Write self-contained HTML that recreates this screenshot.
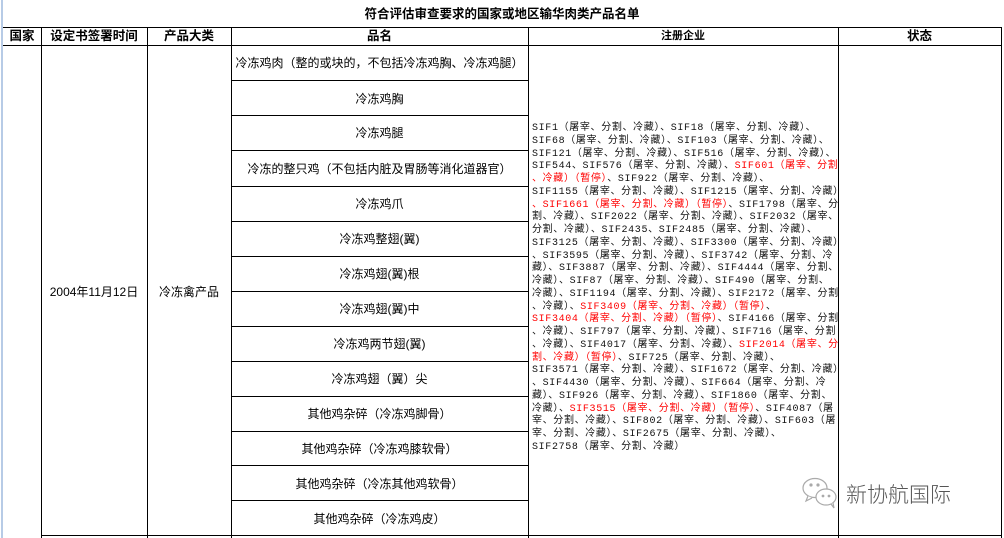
<!DOCTYPE html>
<html><head><meta charset="utf-8"><style>
body{margin:0;width:1004px;height:538px;background:#fff;position:relative;overflow:hidden;font-family:"Liberation Sans","Noto Sans CJK SC",sans-serif;color:#000}
.a{position:absolute}
.v{position:absolute;width:1px;background:#000}
.h{position:absolute;height:1px;background:#000}
.t{position:absolute;font-size:12px;text-align:center;white-space:nowrap;line-height:14px}
.b{font-weight:bold;font-size:12.5px}
.reg{position:absolute;left:532px;top:123px;font-size:10px;line-height:12.75px;letter-spacing:0.65px;white-space:nowrap;font-family:"Liberation Mono","Noto Sans CJK SC",monospace;color:#111}
.r{color:#f00}
</style></head><body>
<div class="a" style="left:1px;top:0;width:2px;height:538px;background:#b7cbe6"></div>
<div class="t b" style="left:0;width:1004px;top:7px;">符合评估审查要求的国家或地区输华肉类产品名单</div>
<div class="h" style="left:3px;width:999px;top:27px"></div>
<div class="h" style="left:3px;width:999px;top:45px"></div>
<div class="h" style="left:41px;width:961px;top:535px"></div>
<div class="h" style="left:231px;width:298px;top:80px"></div>
<div class="h" style="left:231px;width:298px;top:115px"></div>
<div class="h" style="left:231px;width:298px;top:150px"></div>
<div class="h" style="left:231px;width:298px;top:186px"></div>
<div class="h" style="left:231px;width:298px;top:221px"></div>
<div class="h" style="left:231px;width:298px;top:256px"></div>
<div class="h" style="left:231px;width:298px;top:291px"></div>
<div class="h" style="left:231px;width:298px;top:326px"></div>
<div class="h" style="left:231px;width:298px;top:361px"></div>
<div class="h" style="left:231px;width:298px;top:396px"></div>
<div class="h" style="left:231px;width:298px;top:431px"></div>
<div class="h" style="left:231px;width:298px;top:465px"></div>
<div class="h" style="left:231px;width:298px;top:500px"></div>
<div class="v" style="left:41px;top:27px;height:511px"></div>
<div class="v" style="left:147px;top:27px;height:511px"></div>
<div class="v" style="left:231px;top:27px;height:511px"></div>
<div class="v" style="left:528px;top:27px;height:511px"></div>
<div class="v" style="left:838px;top:27px;height:511px"></div>
<div class="v" style="left:1001px;top:27px;height:511px"></div>
<div class="t b" style="left:3px;width:38px;top:29px">国家</div>
<div class="t b" style="left:41px;width:106px;top:29px">设定书签署时间</div>
<div class="t b" style="left:147px;width:84px;top:29px">产品大类</div>
<div class="t b" style="left:231px;width:297px;top:29px">品名</div>
<div class="t b" style="left:528px;width:310px;top:29px;font-size:11px">注册企业</div>
<div class="t b" style="left:838px;width:163px;top:29px">状态</div>
<div class="t" style="left:41px;width:106px;top:285px">2004年11月12日</div>
<div class="t" style="left:147px;width:84px;top:285px">冷冻禽产品</div>
<div class="t" style="left:231px;width:297px;top:56px">冷冻鸡肉（整的或块的，不包括冷冻鸡胸、冷冻鸡腿）</div>
<div class="t" style="left:231px;width:297px;top:92px">冷冻鸡胸</div>
<div class="t" style="left:231px;width:297px;top:126px">冷冻鸡腿</div>
<div class="t" style="left:231px;width:297px;top:162px">冷冻的整只鸡（不包括内脏及胃肠等消化道器官）</div>
<div class="t" style="left:231px;width:297px;top:197px">冷冻鸡爪</div>
<div class="t" style="left:231px;width:297px;top:232px">冷冻鸡整翅(翼)</div>
<div class="t" style="left:231px;width:297px;top:267px">冷冻鸡翅(翼)根</div>
<div class="t" style="left:231px;width:297px;top:302px">冷冻鸡翅(翼)中</div>
<div class="t" style="left:231px;width:297px;top:337px">冷冻鸡两节翅(翼)</div>
<div class="t" style="left:231px;width:297px;top:372px">冷冻鸡翅（翼）尖</div>
<div class="t" style="left:231px;width:297px;top:407px">其他鸡杂碎（冷冻鸡脚骨）</div>
<div class="t" style="left:231px;width:297px;top:442px">其他鸡杂碎（冷冻鸡膝软骨）</div>
<div class="t" style="left:231px;width:297px;top:477px">其他鸡杂碎（冷冻其他鸡软骨）</div>
<div class="t" style="left:231px;width:297px;top:512px">其他鸡杂碎（冷冻鸡皮）</div>
<div class="reg">SIF1（屠宰、分割、冷藏）、SIF18（屠宰、分割、冷藏）、<br>SIF68（屠宰、分割、冷藏）、SIF103（屠宰、分割、冷藏）、<br>SIF121（屠宰、分割、冷藏）、SIF516（屠宰、分割、冷藏）、<br>SIF544、SIF576（屠宰、分割、冷藏）、<span class="r">SIF601（屠宰、分割</span><br><span class="r">、冷藏）（暂停）</span>、SIF922（屠宰、分割、冷藏）、<br>SIF1155（屠宰、分割、冷藏）、SIF1215（屠宰、分割、冷藏）<br><span class="r">、SIF1661（屠宰、分割、冷藏）（暂停）</span>、SIF1798（屠宰、分<br>割、冷藏）、SIF2022（屠宰、分割、冷藏）、SIF2032（屠宰、<br>分割、冷藏）、SIF2435、SIF2485（屠宰、分割、冷藏）、<br>SIF3125（屠宰、分割、冷藏）、SIF3300（屠宰、分割、冷藏）<br>、SIF3595（屠宰、分割、冷藏）、SIF3742（屠宰、分割、冷<br>藏）、SIF3887（屠宰、分割、冷藏）、SIF4444（屠宰、分割、<br>冷藏）、SIF87（屠宰、分割、冷藏）、SIF490（屠宰、分割、<br>冷藏）、SIF1194（屠宰、分割、冷藏）、SIF2172（屠宰、分割<br>、冷藏）、<span class="r">SIF3409（屠宰、分割、冷藏）（暂停）</span>、<br><span class="r">SIF3404（屠宰、分割、冷藏）（暂停）</span>、SIF4166（屠宰、分割<br>、冷藏）、SIF797（屠宰、分割、冷藏）、SIF716（屠宰、分割<br>、冷藏）、SIF4017（屠宰、分割、冷藏）、<span class="r">SIF2014（屠宰、分</span><br><span class="r">割、冷藏）（暂停）</span>、SIF725（屠宰、分割、冷藏）、<br>SIF3571（屠宰、分割、冷藏）、SIF1672（屠宰、分割、冷藏）<br>、SIF4430（屠宰、分割、冷藏）、SIF664（屠宰、分割、冷<br>藏）、SIF926（屠宰、分割、冷藏）、SIF1860（屠宰、分割、<br>冷藏）、<span class="r">SIF3515（屠宰、分割、冷藏）（暂停）</span>、SIF4087（屠<br>宰、分割、冷藏）、SIF802（屠宰、分割、冷藏）、SIF603（屠<br>宰、分割、冷藏）、SIF2675（屠宰、分割、冷藏）、<br>SIF2758（屠宰、分割、冷藏）</div>
<svg class="a" style="left:800px;top:476px" width="40" height="34" viewBox="0 0 40 34" fill="#fff" stroke="#aaa" stroke-width="1.2"><ellipse cx="15" cy="12" rx="12" ry="9.5"/><path d="M8 20 l-2 5 l6-3"/><ellipse cx="26" cy="21" rx="10" ry="8"/><path d="M31 28 l3 4 l-1-5"/><circle cx="11" cy="9" r="1" fill="#aaa"/><circle cx="18" cy="9" r="1" fill="#aaa"/><circle cx="23" cy="20" r="0.8" fill="#aaa"/><circle cx="29" cy="20" r="0.8" fill="#aaa"/></svg>
<div class="a" style="left:846px;top:481px;font-size:21px;color:#555;font-family:'Noto Sans CJK SC',sans-serif;font-weight:300;line-height:26px">新协航国际</div>
</body></html>
